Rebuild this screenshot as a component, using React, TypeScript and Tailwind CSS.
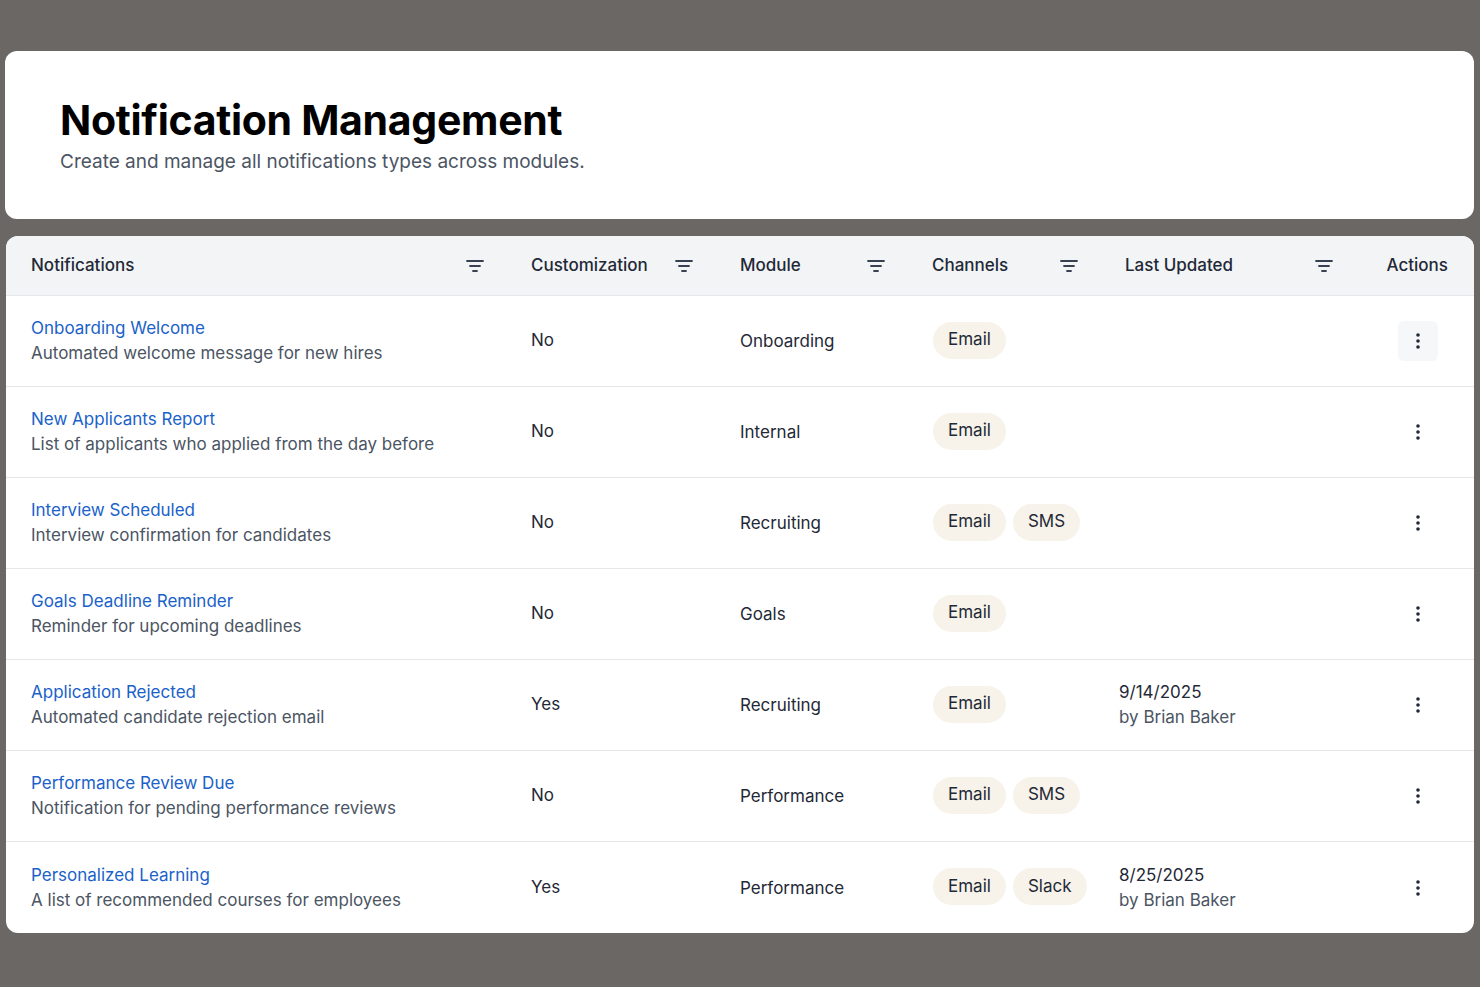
const rows = [
  { t: "Onboarding Welcome", d: "Automated welcome message for new hires", c: "No", m: "Onboarding", ch: ["Email"], u: null, active: true },
  { t: "New Applicants Report", d: "List of applicants who applied from the day before", c: "No", m: "Internal", ch: ["Email"], u: null },
  { t: "Interview Scheduled", d: "Interview confirmation for candidates", c: "No", m: "Recruiting", ch: ["Email", "SMS"], u: null },
  { t: "Goals Deadline Reminder", d: "Reminder for upcoming deadlines", c: "No", m: "Goals", ch: ["Email"], u: null },
  { t: "Application Rejected", d: "Automated candidate rejection email", c: "Yes", m: "Recruiting", ch: ["Email"], u: "9/14/2025" },
  { t: "Performance Review Due", d: "Notification for pending performance reviews", c: "No", m: "Performance", ch: ["Email", "SMS"], u: null },
  { t: "Personalized Learning", d: "A list of recommended courses for employees", c: "Yes", m: "Performance", ch: ["Email", "Slack"], u: "8/25/2025" },
];

const cols = "grid grid-cols-[500px_209px_192px_193px_255px_1fr]";

const FilterIcon = () => (
  <svg width="18" height="14" viewBox="0 0 18 14" fill="none" stroke="#374151" strokeWidth="1.8" strokeLinecap="round">
    <path d="M1 2h16M4 7h10M7 12h4" />
  </svg>
);

const Dots = () => (
  <svg width="4" height="16" viewBox="0 0 4 16" fill="#1f2937">
    <circle cx="2" cy="2" r="1.8" />
    <circle cx="2" cy="8" r="1.8" />
    <circle cx="2" cy="14" r="1.8" />
  </svg>
);

const Head = ({ label, filter = true }: { label: string; filter?: boolean }) => (
  <div className="flex items-center justify-between pl-[25px] pr-[22px] font-medium">
    <span>{label}</span>
    {filter && <FilterIcon />}
  </div>
);

export default function App() {
  return (
    <div className="min-h-screen bg-[#6b6765] pt-[51px] px-[5px] text-[#1f2937]" style={{ fontFamily: "Inter, 'Noto Sans', sans-serif" }}>
      <div className="bg-white rounded-xl h-[168px] px-[55px] pt-[44px] mr-[1px]">
        <h1 className="text-[41px] font-bold text-black leading-tight tracking-[-0.3px]">Notification Management</h1>
        <p className="text-[19px] text-[#4b5563] mt-[2px]">Create and manage all notifications types across modules.</p>
      </div>

      <div className="bg-white rounded-xl mt-[17px] ml-[1px] mr-[1px] overflow-hidden text-[17px]">
        <div className={`${cols} h-[60px] bg-[#f3f4f6] border-b border-[#e5e7eb] text-[#1f2937]`}>
          <Head label="Notifications" />
          <Head label="Customization" />
          <Head label="Module" />
          <Head label="Channels" />
          <Head label="Last Updated" />
          <div className="flex items-center justify-end pr-[26px] font-medium">Actions</div>
        </div>
        {rows.map((r, i) => (
          <div key={r.t} className={`${cols} h-[91px] items-center ${i < rows.length - 1 ? "border-b border-[#e5e7eb]" : ""}`}>
            <div className="pl-[25px]">
              <div className="text-[#1a62c9] leading-[25px]">{r.t}</div>
              <div className="text-[#4b5563] leading-[25px]">{r.d}</div>
            </div>
            <div className="pl-[25px]">{r.c}</div>
            <div className="pl-[25px] pt-[2px]">{r.m}</div>
            <div className="pl-[26px] flex gap-[7px] mb-[2px]">
              {r.ch.map((c) => (
                <span key={c} className="bg-[#f7f3ea] rounded-full px-[15px] h-[37px] flex items-center">{c}</span>
              ))}
            </div>
            <div className="pl-[19px]">
              {r.u && (
                <>
                  <div className="leading-[25px]">{r.u}</div>
                  <div className="text-[#4b5563] leading-[25px]">by Brian Baker</div>
                </>
              )}
            </div>
            <div className="flex justify-end pr-[36px]">
              <div className={`w-[40px] h-[40px] rounded-md flex items-center justify-center ${r.active ? "bg-[#f6f7f8]" : ""}`}>
                <Dots />
              </div>
            </div>
          </div>
        ))}
      </div>
    </div>
  );
}
